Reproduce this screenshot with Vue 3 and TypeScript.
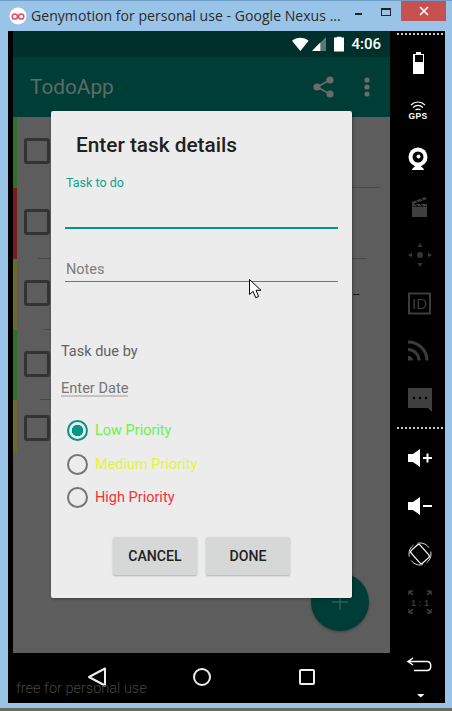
<template>
  <div class="window">
    <header class="titlebar">
      <svg class="logo" width="18" height="18" viewBox="0 0 18 18">
        <circle cx="9" cy="9" r="8.5" fill="#fff" />
        <circle cx="5.8" cy="9.5" r="2.6" fill="none" stroke="#e8476a" stroke-width="1.5" />
        <circle cx="12.2" cy="9.5" r="2.6" fill="none" stroke="#e8476a" stroke-width="1.5" />
      </svg>
      <span class="window-title">Genymotion for personal use - Google Nexus ...</span>
      <div class="window-controls">
        <span class="minimize"></span>
        <span class="maximize"></span>
        <span class="close">
          <svg width="10" height="10" viewBox="0 0 10 10"><path d="M1 1l8 8M9 1l-8 8" stroke="#fff" stroke-width="1.6" /></svg>
        </span>
      </div>
    </header>

    <div class="frame">
      <div class="strip"></div>

      <div class="phone">
        <div class="statusbar">
          <svg width="18" height="16" viewBox="0 0 18 16"><path d="M0 4.5C5 .2 13 .2 18 4.5L9 15.5z" fill="#fff" /></svg>
          <svg width="16" height="16" viewBox="0 0 16 16">
            <path d="M0 15.5L15.5 0v15.5z" fill="#fff" opacity="0.35" />
            <path d="M0 15.5L9 6.5v9z" fill="#fff" />
          </svg>
          <svg class="status-battery" width="11" height="16" viewBox="0 0 11 16"><path d="M3 1V0h5v1h3v15H0V1z" fill="#fff" /></svg>
          <span class="clock">4:06</span>
        </div>
        <div class="toolbar">
          <span class="app-name">TodoApp</span>
          <svg class="share" width="21" height="22" viewBox="0 0 21 22" fill="#6b6b6b">
            <circle cx="17" cy="4" r="3.6" />
            <circle cx="4" cy="11" r="3.6" />
            <circle cx="17" cy="18" r="3.6" />
            <path d="M17 4L4 11l13 7" fill="none" stroke="#6b6b6b" stroke-width="1.6" />
          </svg>
          <svg class="overflow" width="6" height="20" viewBox="0 0 6 20" fill="#6b6b6b">
            <circle cx="3" cy="3" r="2.6" />
            <circle cx="3" cy="10" r="2.6" />
            <circle cx="3" cy="17" r="2.6" />
          </svg>
        </div>

        <div class="content">
          <div v-for="row in rows" :key="row.top" class="row" :style="{ height: row.height + 'px' }">
            <span class="priority" :style="{ background: row.color }"></span>
            <span class="checkbox" :style="{ marginTop: row.boxTop + 'px' }"></span>
            <span v-if="row.left" class="divider" :style="{ left: row.left + 'px', width: row.leftWidth + 'px' }"></span>
            <span v-if="row.right" class="divider" :style="{ left: '339px', width: row.right + 'px' }"></span>
          </div>
          <span class="dashes">--</span>
          <div class="fab">
            <svg width="18" height="18" viewBox="0 0 18 18"><path d="M9 1v16M1 9h16" stroke="#3f6f68" stroke-width="1" /></svg>
          </div>
        </div>

        <div class="navbar">
          <svg width="20" height="20" viewBox="0 0 20 20"><path d="M18 1.5v17L2 10z" fill="none" stroke="#eee" stroke-width="2" stroke-linejoin="round" /></svg>
          <svg width="20" height="20" viewBox="0 0 20 20"><circle cx="10" cy="10" r="8" fill="none" stroke="#eee" stroke-width="2" /></svg>
          <svg width="20" height="20" viewBox="0 0 20 20"><rect x="3" y="3" width="14" height="14" rx="1" fill="none" stroke="#eee" stroke-width="2" /></svg>
        </div>

        <span class="watermark">free for personal use</span>

        <form class="dialog" @submit.prevent>
          <h2 class="dialog-title">Enter task details</h2>
          <label class="field-label">Task to do</label>
          <div class="field-line active"></div>
          <div class="notes">Notes</div>
          <div class="field-line"></div>
          <div class="due-label">Task due by</div>
          <div class="date-link">Enter Date</div>
          <div class="radios">
            <div v-for="p in priorities" :key="p.label" class="radio-row">
              <span class="radio" :class="{ checked: p.checked }"></span>
              <span :style="{ color: p.color }">{{ p.label }}</span>
            </div>
          </div>
          <div class="actions">
            <button type="button">CANCEL</button>
            <button type="submit">DONE</button>
          </div>
        </form>

        <svg class="cursor" width="14" height="21" viewBox="0 0 14 21">
          <path d="M.5.5v15l3.6-3.2 2.6 6.4 2.9-1.2-2.6-6.2h5z" fill="#fff" stroke="#000" stroke-width="1" stroke-linejoin="miter" />
        </svg>
      </div>

      <aside class="sidebar">
        <div class="dots top"></div>
        <svg class="slot" viewBox="0 0 55 48">
          <path d="M26 13h5v2h3v20H23V15h3z" fill="#fff" />
          <rect x="25" y="16" width="8" height="7" fill="#000" />
        </svg>
        <svg class="slot" viewBox="0 0 55 48">
          <g fill="none" stroke="#fff" stroke-width="1.2">
            <path d="M21 18c4-4 10-4 14 0" />
            <path d="M23 20.5c3-2.5 7-2.5 10 0" />
            <path d="M25.5 23c1.5-1 3.5-1 5 0" />
          </g>
          <text x="28" y="31.5" class="gps">GPS</text>
        </svg>
        <svg class="slot" viewBox="0 0 55 48">
          <path d="M22 35c0-2 3-3 4-5h4c1 2 4 3 4 5z" fill="#fff" />
          <circle cx="28" cy="22" r="9.5" fill="#fff" />
          <circle cx="28" cy="22" r="5.5" fill="#000" />
          <circle cx="28.5" cy="21.5" r="2" fill="#fff" />
        </svg>
        <svg class="slot" viewBox="0 0 55 48">
          <rect x="22" y="24" width="15" height="10" fill="#3f3f3f" />
          <path d="M22 21h15v2.5H22z" fill="#3f3f3f" />
          <path d="M25 21l3 2.5M30 21l3 2.5" stroke="#000" stroke-width="1" />
          <path d="M21.5 19l14-5 .8 2.3-14 5z" fill="#3f3f3f" />
          <path d="M25.5 17.5l2.5 1.5M30.5 15.7l2.5 1.5" stroke="#000" stroke-width="1" />
        </svg>
        <svg class="slot" viewBox="0 0 55 48">
          <g fill="#363636">
            <path d="M30 12l2.5 4h-5z" />
            <path d="M30 36l2.5-4h-5z" />
            <path d="M18 24l4-2.5v5z" />
            <path d="M42 24l-4-2.5v5z" />
            <circle cx="30" cy="24" r="3" />
          </g>
        </svg>
        <svg class="slot" viewBox="0 0 55 48">
          <rect x="19" y="14.5" width="21" height="20" fill="none" stroke="#3c3c3c" stroke-width="2" />
          <text x="29.5" y="30" class="id">ID</text>
        </svg>
        <svg class="slot" viewBox="0 0 55 48">
          <g fill="none" stroke="#3c3c3c" stroke-width="3">
            <path d="M18 22.5c6 0 11 5 11 11" />
            <path d="M18 15c10.5 0 19 8 19 18.5" />
          </g>
          <path d="M18 29c3 0 5 2 5 4.5h-5z" fill="#3c3c3c" />
        </svg>
        <svg class="slot" viewBox="0 0 55 48">
          <path d="M18 13h24v24l-4-4H18z" fill="#404040" />
          <g fill="#000">
            <circle cx="24" cy="23" r="1.3" />
            <circle cx="30" cy="23" r="1.3" />
            <circle cx="36" cy="23" r="1.3" />
          </g>
        </svg>
        <div class="dots middle"></div>
        <svg class="slot" viewBox="0 0 55 48">
          <path d="M18 20h5l7-5v18l-7-5h-5z" fill="#fff" />
          <path d="M33 24h9M37.5 19.5v9" stroke="#fff" stroke-width="2" />
        </svg>
        <svg class="slot" viewBox="0 0 55 48">
          <path d="M18 20h5l7-5v18l-7-5h-5z" fill="#fff" />
          <path d="M33 24h9" stroke="#fff" stroke-width="2" />
        </svg>
        <svg class="slot" viewBox="0 0 55 48">
          <circle cx="30" cy="24" r="11" fill="none" stroke="#ddd" stroke-width="1" stroke-dasharray="13 4.3" stroke-dashoffset="3" />
          <rect x="24" y="15.5" width="12" height="17" rx="2" fill="#000" stroke="#fff" stroke-width="1.2" transform="rotate(-42 30 24)" />
        </svg>
        <svg class="slot" viewBox="0 0 55 48">
          <g fill="none" stroke="#3d3d3d" stroke-width="1.5">
            <path d="M19 13v4M19 13h4M19 13l4 4" />
            <path d="M41 13v4M41 13h-4M41 13l-4 4" />
            <path d="M19 35v-4M19 35h4M19 35l4-4" />
            <path d="M41 35v-4M41 35h-4M41 35l-4-4" />
          </g>
          <text x="30" y="27.5" class="ratio">1 : 1</text>
        </svg>
        <svg class="slot back" viewBox="0 0 55 48">
          <path d="M23 19l-5 3.5 5 3.5M18 22.5h19c5 0 5 9 0 9H24" fill="none" stroke="#fff" stroke-width="1.5" />
        </svg>
        <svg class="more" width="55" height="16" viewBox="0 0 55 16"><path d="M27 7h7.5l-3.700 3.500z" fill="#fff" /></svg>
      </aside>
    </div>
    <div class="desktop"></div>
  </div>
</template>

<script setup lang="ts">
interface Row {
  top: number;
  height: number;
  color: string;
  boxTop: number;
  left?: number;
  leftWidth?: number;
  right?: number;
}

const rows: Row[] = [
  { top: 117, height: 71, color: '#31702a', boxTop: 21, right: 28 },
  { top: 188, height: 71, color: '#771c1c', boxTop: 21, right: 15, left: 25, leftWidth: 13 },
  { top: 259, height: 71, color: '#68692a', boxTop: 21, left: 31, leftWidth: 7 },
  { top: 330, height: 70, color: '#31702a', boxTop: 21, left: 27, leftWidth: 11 },
  { top: 400, height: 53, color: '#68692a', boxTop: 15 },
];

const priorities = [
  { label: 'Low Priority', color: '#69f24a', checked: true },
  { label: 'Medium Priority', color: '#e2f53c', checked: false },
  { label: 'High Priority', color: '#f5303a', checked: false },
];
</script>

<style>
html, body {
  margin: 0;
  background: #99c4e8;
}
</style>

<style scoped>
.window {
  width: 452px;
  height: 711px;
  display: flex;
  flex-direction: column;
  background: #99c4e8;
  font-family: Roboto, sans-serif;
  overflow: hidden;
}
.titlebar {
  height: 31px;
  display: flex;
  align-items: flex-start;
  box-sizing: border-box;
  border-top: 1px solid #6f9fc8;
}
.logo {
  margin: 6px 0 0 9px;
}
.window-title {
  margin: 5px 0 0 4px;
  font: 14.1px "Open Sans", sans-serif;
  color: #2b2b2b;
  white-space: nowrap;
}
.window-controls {
  margin-left: auto;
  display: flex;
  align-items: flex-start;
  margin-right: 6px;
}
.minimize {
  width: 7px;
  height: 2px;
  margin-top: 12px;
  background: #222;
}
.maximize {
  width: 8px;
  height: 5px;
  margin: 7px 10px 0 19px;
  border: 1px solid #222;
  border-top-width: 2px;
}
.close {
  width: 45px;
  height: 20px;
  background: #c75050;
  display: flex;
  align-items: center;
  justify-content: center;
}
.frame {
  height: 672px;
  margin: 0 7px 0 8px;
  display: flex;
  background: #000;
}
.strip {
  width: 5px;
}
.phone {
  position: relative;
  width: 377px;
  display: flex;
  flex-direction: column;
}
.statusbar {
  height: 26px;
  display: flex;
  align-items: center;
  background: #00302c;
  box-sizing: border-box;
  padding: 0 9px 0 279px;
}
.statusbar svg + svg {
  margin-left: 3px;
}
.statusbar .status-battery {
  margin-left: 8px;
}
.clock {
  margin-left: 7px;
  color: #fff;
  font-size: 15px;
  font-weight: 500;
}
.toolbar {
  height: 60px;
  display: flex;
  align-items: center;
  background: #003d36;
}
.app-name {
  width: 83px;
  margin-left: 17px;
  font-size: 20.8px;
  color: #5d6b68;
}
.share {
  margin-left: 200px;
}
.overflow {
  margin-left: 30px;
}
.content {
  position: relative;
  height: 536px;
  background: #5d5d5d;
}
.row {
  position: relative;
  display: flex;
}
.priority {
  width: 4px;
  height: 100%;
}
.checkbox {
  width: 20px;
  height: 20px;
  margin-left: 7px;
  border: 3px solid #333;
  border-radius: 3px;
}
.divider {
  position: absolute;
  bottom: 0;
  height: 1px;
  background: #484848;
}
.dashes {
  position: absolute;
  top: 170px;
  left: 340px;
  font-size: 12px;
  color: #111;
}
.fab {
  position: absolute;
  top: 456px;
  left: 298px;
  width: 58px;
  height: 58px;
  border-radius: 50%;
  background: #003d36;
  box-shadow: 0 1px 3px rgba(0, 0, 0, 0.3);
  display: flex;
  align-items: center;
  justify-content: center;
}
.navbar {
  height: 50px;
  box-sizing: border-box;
  padding: 0 0 3px 74px;
  display: flex;
  align-items: center;
  gap: 85px;
}
.watermark {
  position: absolute;
  left: 3px;
  top: 649px;
  font-size: 14.5px;
  font-weight: 300;
  color: #444;
  white-space: nowrap;
}
.dialog {
  position: absolute;
  top: 80px;
  left: 38px;
  width: 301px;
  height: 487px;
  box-sizing: border-box;
  background: #ececec;
  border-radius: 2px;
  box-shadow: 1px 1px 3px rgba(0, 0, 0, 0.35);
  padding-left: 14px;
  display: flex;
  flex-direction: column;
}
.dialog-title {
  margin: 20px 0 0 11px;
  font-size: 20.8px;
  line-height: 28px;
  font-weight: 500;
  color: #212121;
}
.field-label {
  margin: 16px 0 0 1px;
  font-size: 12.5px;
  line-height: 16px;
  color: #10a090;
}
.field-line {
  width: 273px;
  height: 1px;
  background: #757575;
}
.field-line.active {
  height: 2px;
  margin-top: 36px;
  background: #009688;
}
.notes {
  margin: 31px 0 0 1px;
  height: 21px;
  font-size: 14.5px;
  line-height: 20px;
  color: #7c7c7c;
}
.due-label {
  margin: 60px 0 0 -4px;
  font-size: 14.5px;
  line-height: 20px;
  color: #616161;
}
.date-link {
  margin: 19.5px 0 0 -4px;
  align-self: flex-start;
  font-size: 14.6px;
  line-height: 13px;
  color: #757575;
  border-bottom: 2px solid #c4c4c4;
}
.radios {
  margin-top: 23.5px;
  display: flex;
  flex-direction: column;
  gap: 12px;
}
.radio-row {
  height: 21.5px;
  display: flex;
  align-items: center;
  gap: 7px;
  font-size: 14.5px;
}
.radio {
  box-sizing: border-box;
  width: 21px;
  height: 21px;
  margin-left: 2px;
  border: 2px solid #757575;
  border-radius: 50%;
}
.radio.checked {
  border-color: #009688;
  background: radial-gradient(circle, #009688 5.5px, transparent 6px);
}
.actions {
  margin: 28px 0 0 48px;
  display: flex;
  gap: 9px;
}
.actions button {
  width: 84px;
  height: 38px;
  padding: 0;
  border: none;
  border-radius: 2px;
  background: #d6d7d7;
  box-shadow: 0 1px 2px rgba(0, 0, 0, 0.25);
  font: 500 14.1px Roboto, sans-serif;
  color: #212121;
}
.cursor {
  position: absolute;
  left: 236px;
  top: 248px;
}
.sidebar {
  width: 55px;
  display: flex;
  flex-direction: column;
}
.slot {
  display: block;
  width: 55px;
  height: 48px;
  flex: none;
}
.back {
  margin-top: 13px;
}
.more {
  display: block;
}
.dots {
  flex: none;
  box-sizing: border-box;
  background-image: repeating-linear-gradient(90deg, #c8c8c8 0 2px, transparent 2px 4px);
  background-repeat: no-repeat;
  background-size: 46px 2px;
  background-position: 7px 2px;
}
.dots.top {
  height: 8px;
}
.dots.middle {
  height: 11px;
  background-position: 7px 4px;
}
.gps {
  font: bold 8.5px "Liberation Sans", sans-serif;
  fill: #fff;
  text-anchor: middle;
  letter-spacing: 0.4px;
}
.id {
  font: 15px "Liberation Sans", sans-serif;
  fill: #3c3c3c;
  text-anchor: middle;
}
.ratio {
  font: bold 9px "Liberation Sans", sans-serif;
  fill: #3a3a3a;
  text-anchor: middle;
}
.desktop {
  height: 3px;
  margin-top: 5px;
  background: #6f6a60;
}
</style>
